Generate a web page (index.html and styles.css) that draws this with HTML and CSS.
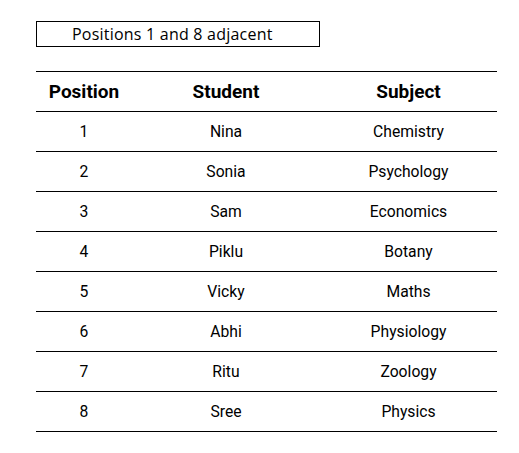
FILE: index.html
```html
<!DOCTYPE html>
<html>
<head>
<meta charset="utf-8">
<link rel="stylesheet" href="styles.css">
</head>
<body>
<div class="page">
  <div class="caption">Positions 1 and 8 adjacent</div>
  <table class="grid">
    <thead>
      <tr><th class="c1">Position</th><th class="c2">Student</th><th class="c3">Subject</th></tr>
    </thead>
    <tbody>
      <tr><td>1</td><td>Nina</td><td>Chemistry</td></tr>
      <tr><td>2</td><td>Sonia</td><td>Psychology</td></tr>
      <tr><td>3</td><td>Sam</td><td>Economics</td></tr>
      <tr><td>4</td><td>Piklu</td><td>Botany</td></tr>
      <tr><td>5</td><td>Vicky</td><td>Maths</td></tr>
      <tr><td>6</td><td>Abhi</td><td>Physiology</td></tr>
      <tr><td>7</td><td>Ritu</td><td>Zoology</td></tr>
      <tr><td>8</td><td>Sree</td><td>Physics</td></tr>
    </tbody>
  </table>
</div>
</body>
</html>
```
FILE: styles.css
```css
html, body { margin: 0; padding: 0; background: #fff; }
.page { padding: 21px 0 0 36px; }
.caption {
  box-sizing: border-box;
  width: 284px;
  height: 26px;
  border: 1px solid #000;
  font-family: "Open Sans", "Liberation Sans", sans-serif;
  font-size: 16px;
  letter-spacing: 0.22px;
  line-height: 24px;
  padding-left: 35px;
  color: #000;
}
.grid {
  margin-top: 24px;
  width: 461px;
  border-collapse: collapse;
  font-family: Roboto, sans-serif;
  color: #000;
}
.grid th, .grid td {
  height: 40px;
  padding: 0;
  text-align: center;
  border-top: 1px solid #000;
  border-bottom: 1px solid #000;
  box-sizing: border-box;
}
.grid th { font-weight: 700; font-size: 19px; }
.grid td { font-size: 15.7px; }
.c1 { width: 96px; }
.c2 { width: 188px; }
.c3 { width: 177px; }
```
